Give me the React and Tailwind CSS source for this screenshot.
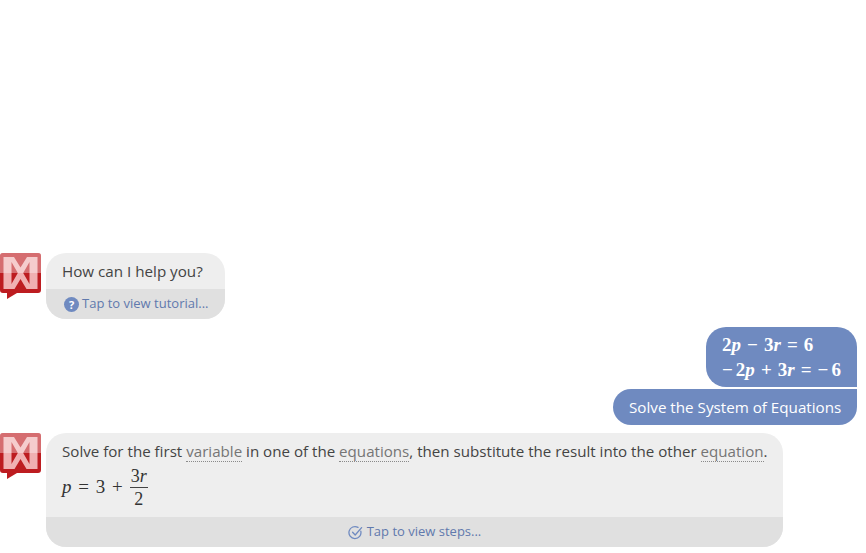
const sans = { fontFamily: '"Open Sans","Noto Sans",sans-serif' };

function Logo() {
  return (
    <svg width="41" height="46" viewBox="0 0 41 46" className="shrink-0">
      <path d="M3 0H38Q41 0 41 3V37Q41 40 38 40H17L7 46V40H3Q0 40 0 37V3Q0 0 3 0Z" fill="#bd1c20" />
      <path d="M3.5 4H37.5V36H3.5Z" fill="#f0b0b1" />
      <path d="M14 4H27L20.5 14.5Z M14.5 36H26.5L20.5 26Z M11.5 9V31L17.8 20Z M29.5 9V31L23.2 20Z" fill="#bd1c20" />
      <path d="M3 0H38Q41 0 41 3V20H0V3Q0 0 3 0Z" fill="#ffffff" opacity=".36" />
    </svg>
  );
}

function HelpDot() {
  return (
    <span className="w-[15px] h-[15px] shrink-0 rounded-full bg-[#6f8ac0] text-white text-[11px] font-bold flex items-center justify-center leading-none">?</span>
  );
}

function CheckCircle() {
  return (
    <svg width="15" height="15" viewBox="0 0 15 15" fill="none" stroke="#6f8ac0" strokeWidth="1.3" strokeLinecap="round" strokeLinejoin="round">
      <path d="M12.8 6.2A6 6 0 1 1 10 2.4" />
      <path d="M4.6 7.2L7.2 10L13.6 2.6" />
    </svg>
  );
}

function Term({ children }) {
  return <span className="text-[#757575] border-b border-dotted border-[#8a8a8a]">{children}</span>;
}

function M({ children }) {
  return <i>{children}</i>;
}

export default function App() {
  const math = { fontFamily: '"Liberation Serif","DejaVu Serif",serif' };
  return (
    <div className="w-[866px] h-[553px] bg-white flex flex-col justify-end overflow-hidden pb-[6px]" style={sans}>
      <div className="flex gap-[5px] items-start">
        <Logo />
        <div className="w-[179px] h-[66px] rounded-[20px] overflow-hidden bg-[#eeeeee] flex flex-col">
          <div className="h-[36px] px-4 flex items-center text-[15.2px] text-[#444444]">How can I help you?</div>
          <div className="h-[30px] bg-[#e0e0e0] pl-[18px] flex items-center gap-[3px] text-[13px] text-[#6079ad] whitespace-nowrap">
            <HelpDot />
            <span>Tap to view tutorial...</span>
          </div>
        </div>
      </div>

      <div className="mt-2 flex flex-col items-end pr-[9px] gap-[2px]">
        <div className="w-[151px] h-[60px] rounded-l-[20px] rounded-tr-[20px] bg-[#6f8ac0] text-white font-bold px-4 pt-[6px] text-[19px] leading-[24.5px] whitespace-nowrap [word-spacing:1.3px]" style={math}>
          <div>2<M>p</M> − 3<M>r</M> = 6</div>
          <div><span className="pr-[3px]">−</span>2<M>p</M> + 3<M>r</M> = <span className="pr-[3px]">−</span>6</div>
        </div>
        <div className="w-[244px] h-[36px] rounded-l-[18px] rounded-br-[18px] bg-[#6f8ac0] text-white px-4 flex items-center text-[15.2px] whitespace-nowrap">
          Solve the System of Equations
        </div>
      </div>

      <div className="mt-2 flex gap-[5px] items-start">
        <Logo />
        <div className="w-[737px] h-[114px] rounded-[20px] overflow-hidden bg-[#eeeeee] flex flex-col">
          <div className="h-[84px] px-4 pt-[7px] text-[#444444]">
            <div className="text-[15.13px] leading-[22px] whitespace-nowrap">
              Solve for the first <Term>variable</Term> in one of the <Term>equations</Term>, then substitute the result into the other <Term>equation</Term>.
            </div>
            <div className="flex items-center gap-[7px] mt-[3px] text-[19px] text-[#333333] [word-spacing:2px]" style={math}>
              <span><M>p</M> = 3 +</span>
              <span className="flex flex-col items-center text-[18px] leading-[22px]">
                <span className="border-b border-[#444444] px-[1px]">3<M>r</M></span>
                <span>2</span>
              </span>
            </div>
          </div>
          <div className="h-[30px] bg-[#e0e0e0] flex items-center justify-center gap-[4px] text-[13px] text-[#6079ad]">
            <CheckCircle />
            <span>Tap to view steps...</span>
          </div>
        </div>
      </div>
    </div>
  );
}
